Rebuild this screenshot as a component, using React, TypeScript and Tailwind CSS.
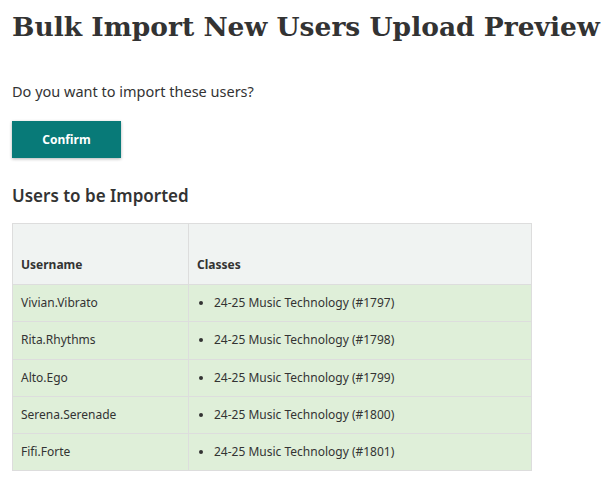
const users = [
  { username: "Vivian.Vibrato", cls: "24-25 Music Technology (#1797)" },
  { username: "Rita.Rhythms", cls: "24-25 Music Technology (#1798)" },
  { username: "Alto.Ego", cls: "24-25 Music Technology (#1799)" },
  { username: "Serena.Serenade", cls: "24-25 Music Technology (#1800)" },
  { username: "Fifi.Forte", cls: "24-25 Music Technology (#1801)" },
];

export default function App() {
  return (
    <div className="min-h-[496px] bg-white px-3 pt-[10px] text-[#333] font-['Noto_Sans',sans-serif]">
      <h1 className="font-['DejaVu_Serif',serif] text-[26.5px] font-bold leading-[34px] text-[#333] whitespace-nowrap">
        Bulk Import New Users Upload Preview
      </h1>
      <p className="mt-[37px] text-[14.5px] leading-5">Do you want to import these users?</p>
      <button className="mt-[20px] flex h-[37px] w-[109px] items-center justify-center bg-[#087a78] text-[12px] font-bold text-white shadow-[0_1px_3px_rgba(0,0,0,0.3)]">
        Confirm
      </button>
      <h2 className="mt-[26px] text-[17px] font-semibold leading-6">Users to be Imported</h2>
      <table className="mt-[15px] w-[520px] border-collapse text-[12px]">
        <thead>
          <tr className="bg-[#f0f3f2]">
            <th className="h-[61px] w-[176px] border border-[#dddddd] px-2 pb-[10px] align-bottom text-left font-bold">Username</th>
            <th className="h-[61px] border border-[#dddddd] px-2 pb-[10px] align-bottom text-left font-bold">Classes</th>
          </tr>
        </thead>
        <tbody>
          {users.map((u) => (
            <tr key={u.username} className="bg-[#dfefd9]">
              <td className="h-[37.3px] border border-[#dddddd] px-2">{u.username}</td>
              <td className="h-[37.3px] border border-[#dddddd] px-2">
                <ul className="list-disc pl-[17px]">
                  <li>{u.cls}</li>
                </ul>
              </td>
            </tr>
          ))}
        </tbody>
      </table>
    </div>
  );
}
